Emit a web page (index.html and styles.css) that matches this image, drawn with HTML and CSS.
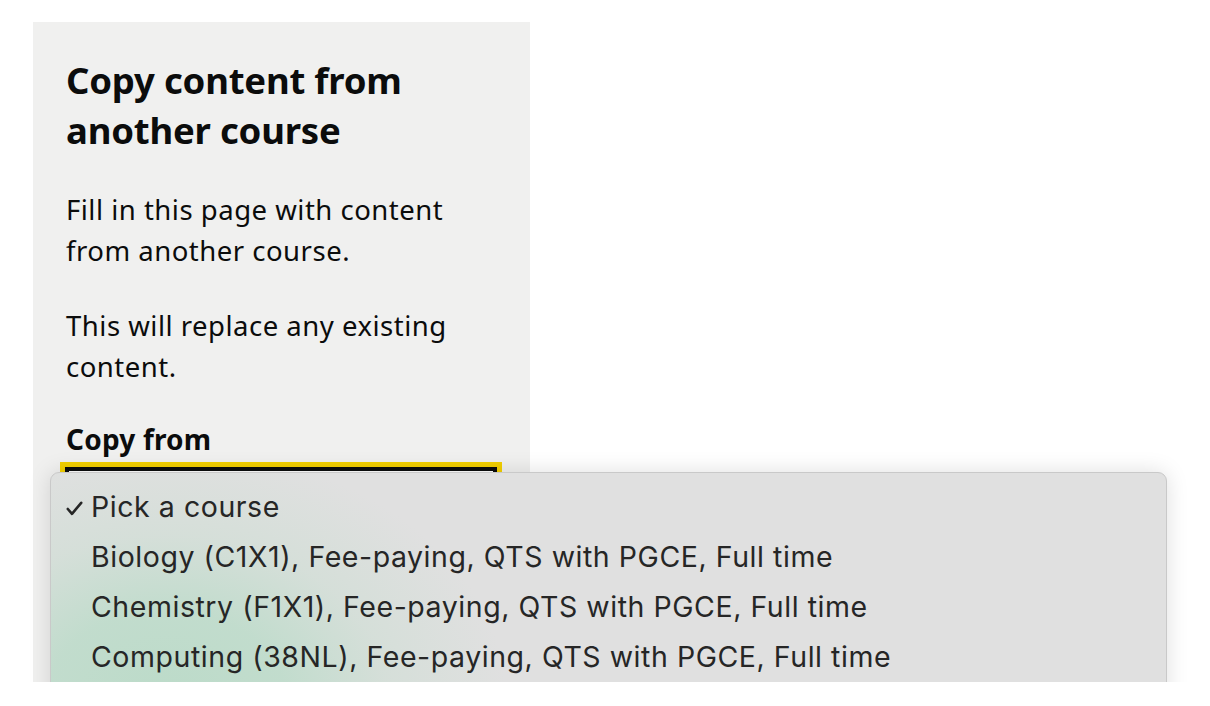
FILE: index.html
```html
<!DOCTYPE html>
<html lang="en">
<head>
<meta charset="utf-8">
<title>Copy content from another course</title>
<link rel="stylesheet" href="styles.css">
</head>
<body>
<div class="page">
  <aside class="panel">
    <h2 class="panel-title">Copy content from another course</h2>
    <p class="panel-text">Fill in this page with content from another course.</p>
    <p class="panel-text">This will replace any existing content.</p>
    <label class="panel-label" for="copy-from">Copy from</label>
    <div class="select" id="copy-from"></div>
  </aside>
  <div class="menu">
    <div class="menu-glow"></div>
    <ul class="menu-list">
      <li class="menu-item is-selected"><svg class="menu-check" width="17" height="15" viewBox="0 0 17 15" aria-hidden="true"><path d="M1.8 8 L6 12.8 L15.2 1.8" fill="none" stroke="#262626" stroke-width="2.6" stroke-linecap="round" stroke-linejoin="round"/></svg>Pick a course</li>
      <li class="menu-item">Biology (C1X1), Fee-paying, QTS with PGCE, Full time</li>
      <li class="menu-item">Chemistry (F1X1), Fee-paying, QTS with PGCE, Full time</li>
      <li class="menu-item">Computing (38NL), Fee-paying, QTS with PGCE, Full time</li>
    </ul>
  </div>
</div>
</body>
</html>
```
FILE: styles.css
```css
html, body {
  margin: 0;
  padding: 0;
  background: #ffffff;
}

.page {
  position: relative;
  height: 682px;
  overflow: hidden;
  padding: 22px 0 0 33px;
  box-sizing: border-box;
  font-family: "Noto Sans", sans-serif;
  color: #0b0c0c;
}

.panel {
  width: 497px;
  height: 700px;
  box-sizing: border-box;
  background: #f0f0ef;
  padding: 33px 0 0 33px;
}

.panel-title {
  margin: 0;
  width: 420px;
  font-size: 36.5px;
  line-height: 50px;
  font-weight: 700;
  letter-spacing: -0.2px;
}

.panel-text {
  margin: 34px 0 0;
  width: 400px;
  font-size: 27.5px;
  line-height: 41px;
  font-weight: 400;
  letter-spacing: 0.5px;
}

.panel-label {
  display: block;
  margin-top: 32px;
  font-size: 28px;
  line-height: 41px;
  font-weight: 700;
  letter-spacing: 0.2px;
}

.select {
  margin: 7px 0 0 -1px;
  width: 432px;
  height: 60px;
  box-sizing: border-box;
  border-top: 4px solid #0b0c0c;
  border-left: 4px solid #0b0c0c;
  border-right: 4px solid #0b0c0c;
  outline: 5px solid #f2cf00;
  background: #ffffff;
}

.menu {
  position: absolute;
  left: 50px;
  top: 472px;
  width: 1117px;
  height: 260px;
  box-sizing: border-box;
  border: 1px solid #c9c9c9;
  border-radius: 9px;
  background: #e0e0e0;
  box-shadow: 0 0 22px rgba(0, 0, 0, 0.13);
  overflow: hidden;
  font-family: Inter, "Liberation Sans", sans-serif;
  color: #262626;
}

.menu-glow {
  position: absolute;
  inset: 0;
  background: radial-gradient(ellipse 340px 250px at 115px 225px, rgba(188, 219, 201, 1) 0%, rgba(192, 220, 204, 0.95) 35%, rgba(206, 222, 212, 0.6) 65%, rgba(224, 224, 224, 0) 100%);
}

.menu-list {
  position: relative;
  list-style: none;
  margin: 0;
  padding: 9px 0 0 0;
}

.menu-item {
  position: relative;
  padding-left: 40px;
  font-size: 28.5px;
  line-height: 50px;
  letter-spacing: 0.55px;
  white-space: nowrap;
}

.menu-check {
  position: absolute;
  left: 15px;
  top: 19px;
}
```
